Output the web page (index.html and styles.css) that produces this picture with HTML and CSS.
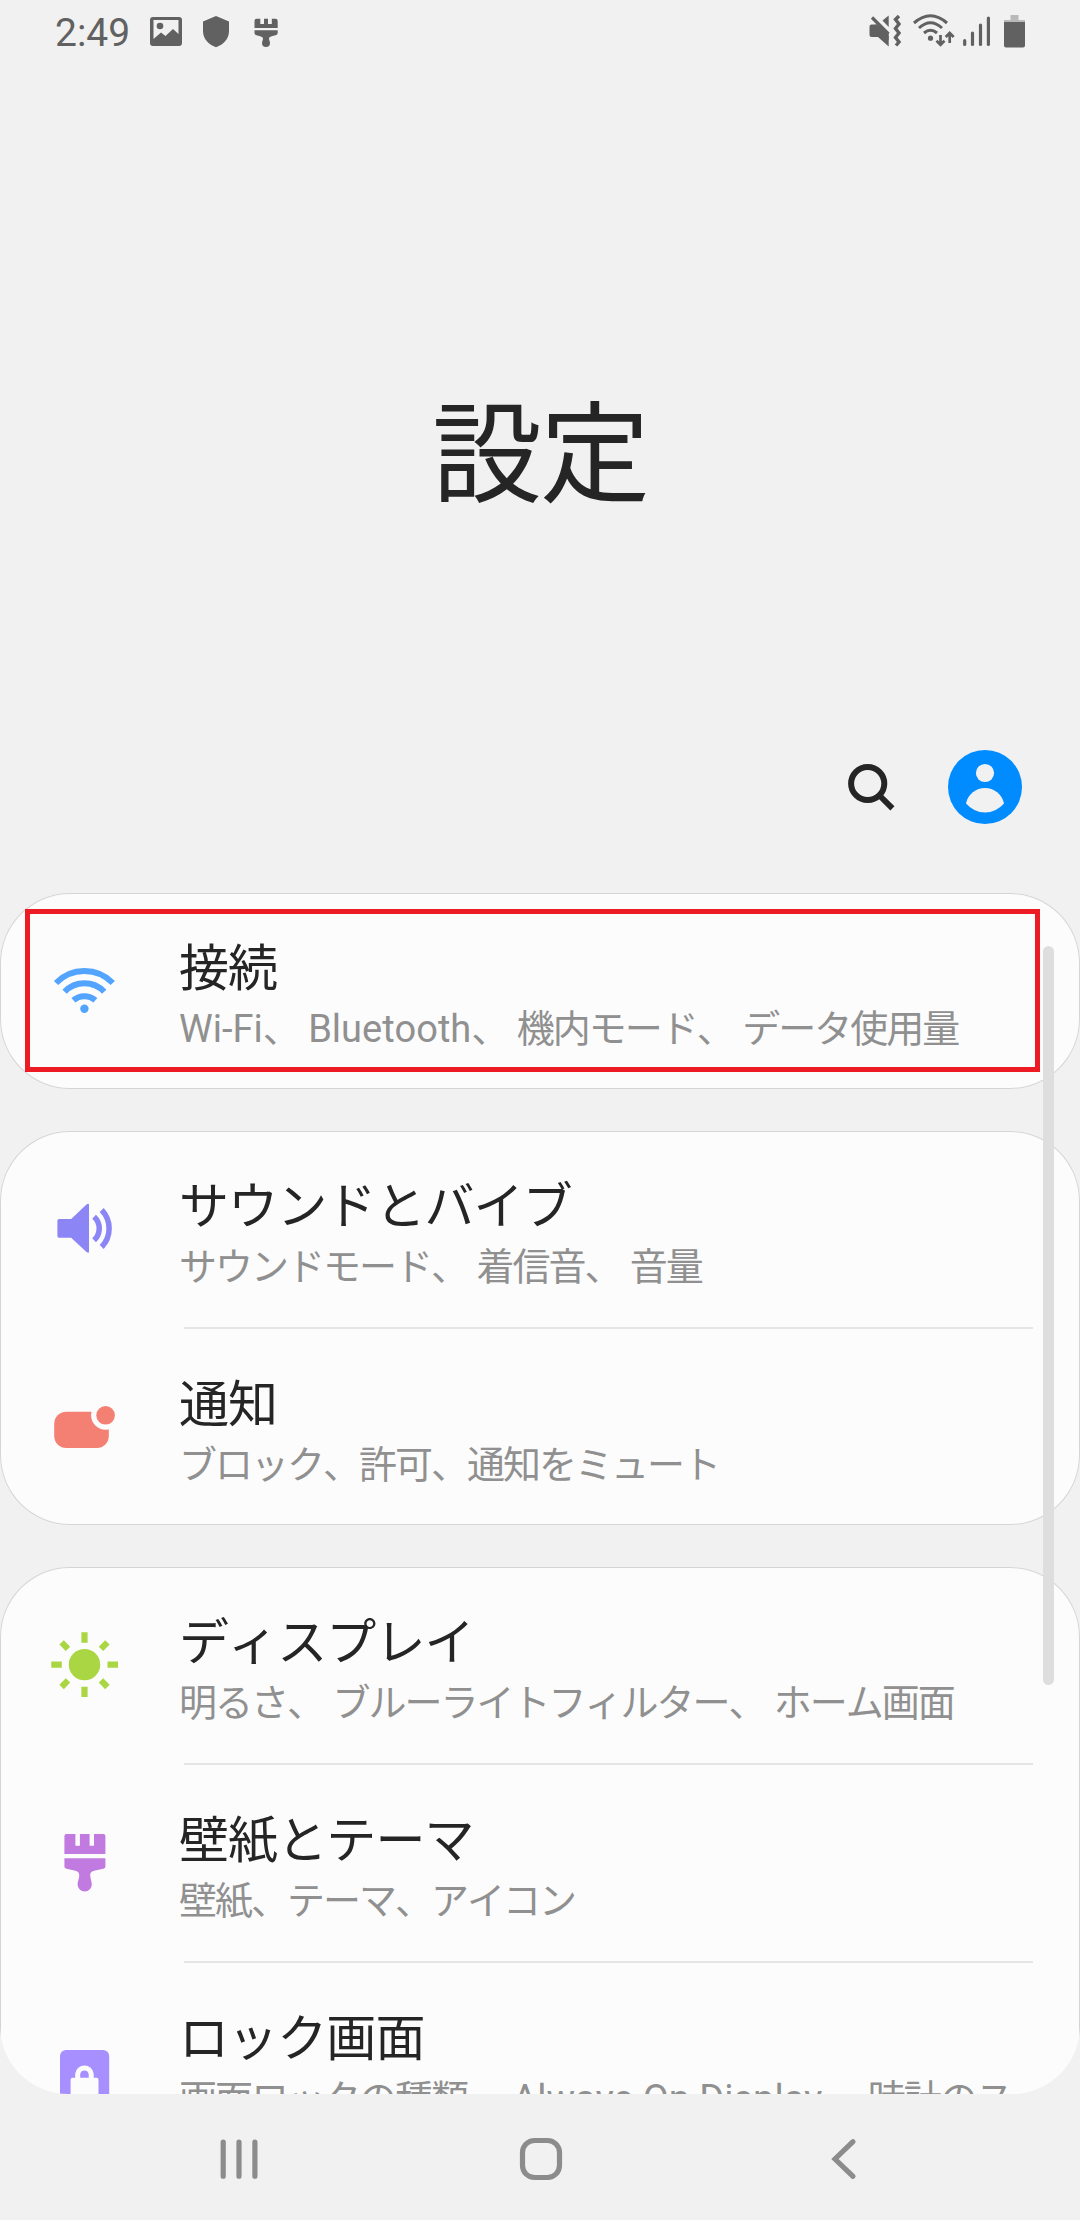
FILE: index.html
```html
<!DOCTYPE html>
<html lang="ja">
<head>
<meta charset="utf-8">
<title>設定</title>
<link rel="stylesheet" href="styles.css">
</head>
<body>
<div class="screen">
  <header class="status">
    <div class="status-left">
      <span class="clock">2:49</span>
      <svg class="notices" width="132" height="36" viewBox="148 14 132 36">
        <path fill-rule="evenodd" d="M153 17H179a3 3 0 0 1 3 3V43a3 3 0 0 1-3 3H153a3 3 0 0 1-3-3V20a3 3 0 0 1 3-3ZM153.500 20V39L161 32.500L165.500 36L173 29L178.500 34V20Z"/>
        <circle cx="160" cy="26" r="3.300"/>
        <path d="M216 16L229 21.500V31C229 39 223.500 44.500 216 47.300C208.500 44.500 203 39 203 31V21.500Z"/>
        <path d="M256.500 18.700H260.300V24H264V18.700H268V24H271.800V18.700H275.500Q277.700 18.700 277.700 21V28H254.500V21Q254.500 18.700 256.500 18.700ZM254.500 30.200H277.700V33Q277.700 34.800 275.500 35.200C271 36 268.800 37 269 38.500C269 40 270 41.500 270 43A4 4 0 0 1 262 43C262 41.500 263 40 263 38.500C263 37 261 36 256.500 35.200Q254.500 34.800 254.500 33Z"/>
      </svg>
    </div>
    <svg class="signals" width="160" height="38" viewBox="868 12 160 38">
      <path d="M870 24.500H876.500L888.700 36V46.500L878 37H871.500Q869.500 37 869.500 35V26.500Q869.500 24.500 871.500 24.500Z"/>
      <path d="M876 24L888.700 34V40L874 28ZM888.700 15.500V27L882.500 20.500Z"/>
      <path class="line" d="M872 17.500L888.500 34" stroke-width="3.200"/>
      <path class="line" d="M899 16L895.500 19.500L899 24L895.500 28.500L899 33L895.500 37.500L899 42L896 45.500" stroke-width="3.400"/>
      <path class="line" d="M914 23Q930.500 8.500 947 23M919 28Q930.500 17.500 942 28M924 33Q930.500 27.500 937 33" stroke-width="3"/>
      <circle cx="930.500" cy="38.200" r="2.600"/>
      <path class="line" d="M940.500 35V44.500M936.500 40.800L940.500 44.800L944.500 40.800M949.700 43V33.500M945.700 37L949.700 33L953.700 37" stroke-width="2.700"/>
      <path class="line" stroke-linecap="round" d="M964.700 40.500V44.500M972.500 33V44.500M980.500 25V44.500M988.400 18V44.500" stroke-width="3.200"/>
      <path class="battery-cap" d="M1010.500 15H1018.500V20H1025V24H1004V20H1010.500Z"/>
      <path d="M1004 22H1025V45.500Q1025 47.500 1023 47.500H1006Q1004 47.500 1004 45.500Z"/>
    </svg>
  </header>

  <div class="hero"><h1>設定</h1></div>

  <div class="tools">
    <svg class="search" width="52" height="52" viewBox="845 761 52 52">
      <circle cx="867.700" cy="783.500" r="16.600" stroke-width="6"/>
      <path d="M878.500 794.500L892.400 808.400" stroke-width="5.800"/>
    </svg>
    <svg class="avatar" width="74" height="74" viewBox="0 0 74 74">
      <circle class="disc" cx="37" cy="37" r="37"/>
      <circle cx="37" cy="23" r="9.100"/>
      <path d="M18 53.500C20 44 28 38 37 38S54 44 56 53.500Q48 62.500 37 62.500T18 53.500Z"/>
    </svg>
  </div>

  <main class="list">
    <section class="card">
      <div class="row">
        <svg class="icon wifi" viewBox="0 0 72 72">
          <path d="M8 28A39.600 39.600 0 0 1 64.800 28M16.600 36.700A27.300 27.300 0 0 1 56.200 36.700M25.400 45.300A16.800 16.800 0 0 1 47.400 45.300"/>
          <circle cx="36.400" cy="53.700" r="4.200"/>
        </svg>
        <div class="label"><h2>接続</h2><p><span class="latin">Wi-Fi</span>、 <span class="latin">Bluetooth</span>、 機内モード、 データ使用量</p></div>
      </div>
    </section>

    <section class="card">
      <div class="row">
        <svg class="icon sound" viewBox="0 0 72 72">
          <path class="fill" d="M11 26H23.200L38.500 11.500Q41 10 41 12V58.700Q41 60.500 38.500 59L23.200 44.700H11Q9.400 44.700 9.400 43V27.700Q9.400 26 11 26Z"/>
          <path d="M46.100 23.700A16 16 0 0 1 46.100 47.200M53.700 17A26.800 26.800 0 0 1 53.700 54"/>
        </svg>
        <div class="label"><h2>サウンドとバイブ</h2><p>サウンドモード、 着信音、 音量</p></div>
      </div>
      <div class="row">
        <svg class="icon notice" viewBox="0 0 72 72">
          <rect x="6.200" y="20.700" width="54.600" height="36.300" rx="12"/>
          <circle class="gap" cx="57.600" cy="24.300" r="14.500"/>
          <circle cx="57.600" cy="24.300" r="9.300"/>
        </svg>
        <div class="label"><h2>通知</h2><p>ブロック、許可、通知をミュート</p></div>
      </div>
    </section>

    <section class="card">
      <div class="row">
        <svg class="icon sun" viewBox="0 0 72 72">
          <circle cx="36.500" cy="35.600" r="15.700"/>
          <path d="M36.500 3.300V13.700M36.500 57.700V68M3.300 35.700H13.800M59.500 35.700H70M13.600 13.300L20 19.900M59.400 13.300L53 19.900M13.600 58L20 51.400M59.400 58L53 51.400"/>
        </svg>
        <div class="label"><h2>ディスプレイ</h2><p>明るさ、 ブルーライトフィルター、 ホーム画面</p></div>
      </div>
      <div class="row">
        <svg class="icon brush" viewBox="0 0 72 72">
          <path d="M18.500 7H27.400V18.700H31.900V7H41.600V18.700H46V7H55.300Q57.400 7 57.400 9V27H16.400V9Q16.400 7 18.500 7ZM16.400 31.300H57.400V39.500Q57.400 41.300 55.300 41.700L47 43.500C43 44.500 42 46 42.300 49C42.500 52 43.800 54.500 43.800 57.500A7.100 7.100 0 0 1 29.600 57.500C29.600 54.500 31 52 31.200 49C31.500 46 30.500 44.500 26.500 43.500L18.500 41.700Q16.400 41.300 16.400 39.500Z"/>
        </svg>
        <div class="label"><h2>壁紙とテーマ</h2><p>壁紙、テーマ、アイコン</p></div>
      </div>
      <div class="row">
        <svg class="icon lock" viewBox="0 0 72 72">
          <rect x="12" y="25" width="49.200" height="60" rx="6"/>
          <rect class="body" x="22.600" y="52.700" width="27.900" height="22" rx="2"/>
          <path d="M29.700 54V49A6.800 6.800 0 0 1 43.200 49V54"/>
        </svg>
        <div class="label"><h2>ロック画面</h2><p>画面ロックの種類、 <span class="latin">Always On Display</span>、 時計のス</p></div>
      </div>
    </section>
  </main>

  <nav class="nav">
    <svg width="44" height="44" viewBox="0 0 44 44"><path d="M6.200 5V39.200M22 5V39.200M37.900 5V39.200"/></svg>
    <svg width="44" height="44" viewBox="0 0 44 44"><rect x="3.500" y="3.500" width="37" height="37" rx="12"/></svg>
    <svg width="44" height="44" viewBox="0 0 44 44"><path d="M32 4.700L14 22L32 39.300"/></svg>
  </nav>

  <div class="highlight"></div>
  <div class="scrollbar"></div>
</div>
</body>
</html>
```
FILE: styles.css
```css
* {
  box-sizing: border-box;
}

body {
  margin: 0;
  background: #f1f1f1;
}

svg {
  display: block;
  flex: none;
}

h1,
h2,
p {
  margin: 0;
  font-weight: 400;
}

.screen {
  position: relative;
  display: flex;
  flex-direction: column;
  width: 1080px;
  height: 2220px;
  overflow: hidden;
  background: #f1f1f1;
  color: #252525;
  font-family: "Noto Sans CJK JP", sans-serif;
  font-kerning: none;
}

/* Status bar */
.status {
  display: flex;
  justify-content: space-between;
  height: 64px;
  padding: 0 52px 0 55px;
  color: #616161;
  fill: #616161;
}

.status-left {
  display: flex;
}

.clock {
  width: 93px;
  font: 400 39px/66px Roboto, sans-serif;
}

.notices {
  margin-top: 14px;
}

.signals {
  margin-top: 12px;
}

.line {
  fill: none;
  stroke: #616161;
}

.battery-cap {
  fill: #b9b9b9;
}

/* Collapsing title */
.hero {
  display: flex;
  justify-content: center;
  align-items: center;
  height: 654px;
  padding-top: 109px;
}

h1 {
  font-size: 110px;
  line-height: 160px;
  letter-spacing: -2px;
}

.tools {
  display: flex;
  justify-content: flex-end;
  align-items: center;
  gap: 51px;
  height: 175px;
  padding: 32px 58px 69px 0;
}

.search {
  fill: none;
  stroke: #252525;
}

.avatar {
  fill: #f1f1f1;
}

.avatar .disc {
  fill: #008cff;
}

/* Settings groups */
.list {
  display: flex;
  flex-direction: column;
  gap: 42px;
  height: 1201px;
  overflow: hidden;
  border-radius: 0 0 68px 68px;
}

.card {
  flex: none;
  border-radius: 70px;
  background: #fcfcfc;
  box-shadow: inset 0 0 0 1px #d5d5d5;
}

.row {
  display: flex;
  height: 196px;
  padding-left: 48px;
}

.row + .row {
  height: 198px;
  background: linear-gradient(#e5e5e5, #e5e5e5) 184px 0 / 849px 2px no-repeat;
  padding-top: 2px;
}

.icon {
  width: 72px;
  height: 72px;
  margin: 62px 59px 0 0;
}

.label {
  padding-top: 41px;
  white-space: nowrap;
}

h2 {
  font-size: 50px;
  line-height: 60px;
  letter-spacing: -0.9px;
}

p {
  margin-top: 7px;
  color: #909090;
  font-family: Roboto, "Noto Sans CJK JP", sans-serif;
  font-size: 38px;
  line-height: 56px;
  letter-spacing: -2px;
  word-spacing: 2px;
}

.latin {
  letter-spacing: 0;
  word-spacing: 0;
}

.wifi {
  fill: none;
  stroke: #52a4ff;
  stroke-width: 6;
}

.wifi circle {
  fill: #52a4ff;
  stroke: none;
}

.sound {
  fill: none;
  stroke: #8c85f5;
  stroke-width: 5.5;
}

.sound .fill {
  fill: #8c85f5;
  stroke: none;
}

.notice {
  fill: #f38072;
}

.notice .gap {
  fill: #fcfcfc;
}

.sun {
  fill: #a9d642;
  stroke: #a9d642;
  stroke-width: 6.2;
}

.sun circle {
  stroke: none;
}

.brush {
  fill: #c17ae0;
}

.lock {
  fill: #a78fff;
}

.lock .body {
  fill: #fcfcfc;
}

.lock path {
  fill: none;
  stroke: #fcfcfc;
  stroke-width: 5;
}

/* System navigation */
.nav {
  display: grid;
  grid-template-columns: repeat(3, 302px);
  justify-items: center;
  height: 126px;
  padding: 43px 0 0 88px;
  fill: none;
  stroke: #8c8c8c;
  stroke-width: 5.2;
  stroke-linecap: round;
}

/* Overlays above the list */
.highlight {
  position: absolute;
  left: 25px;
  top: 909px;
  width: 1015px;
  height: 163px;
  border: 5px solid #ed1c24;
}

.scrollbar {
  position: absolute;
  left: 1043px;
  top: 946px;
  width: 11px;
  height: 739px;
  border-radius: 6px;
  background: #dedede;
}
```
